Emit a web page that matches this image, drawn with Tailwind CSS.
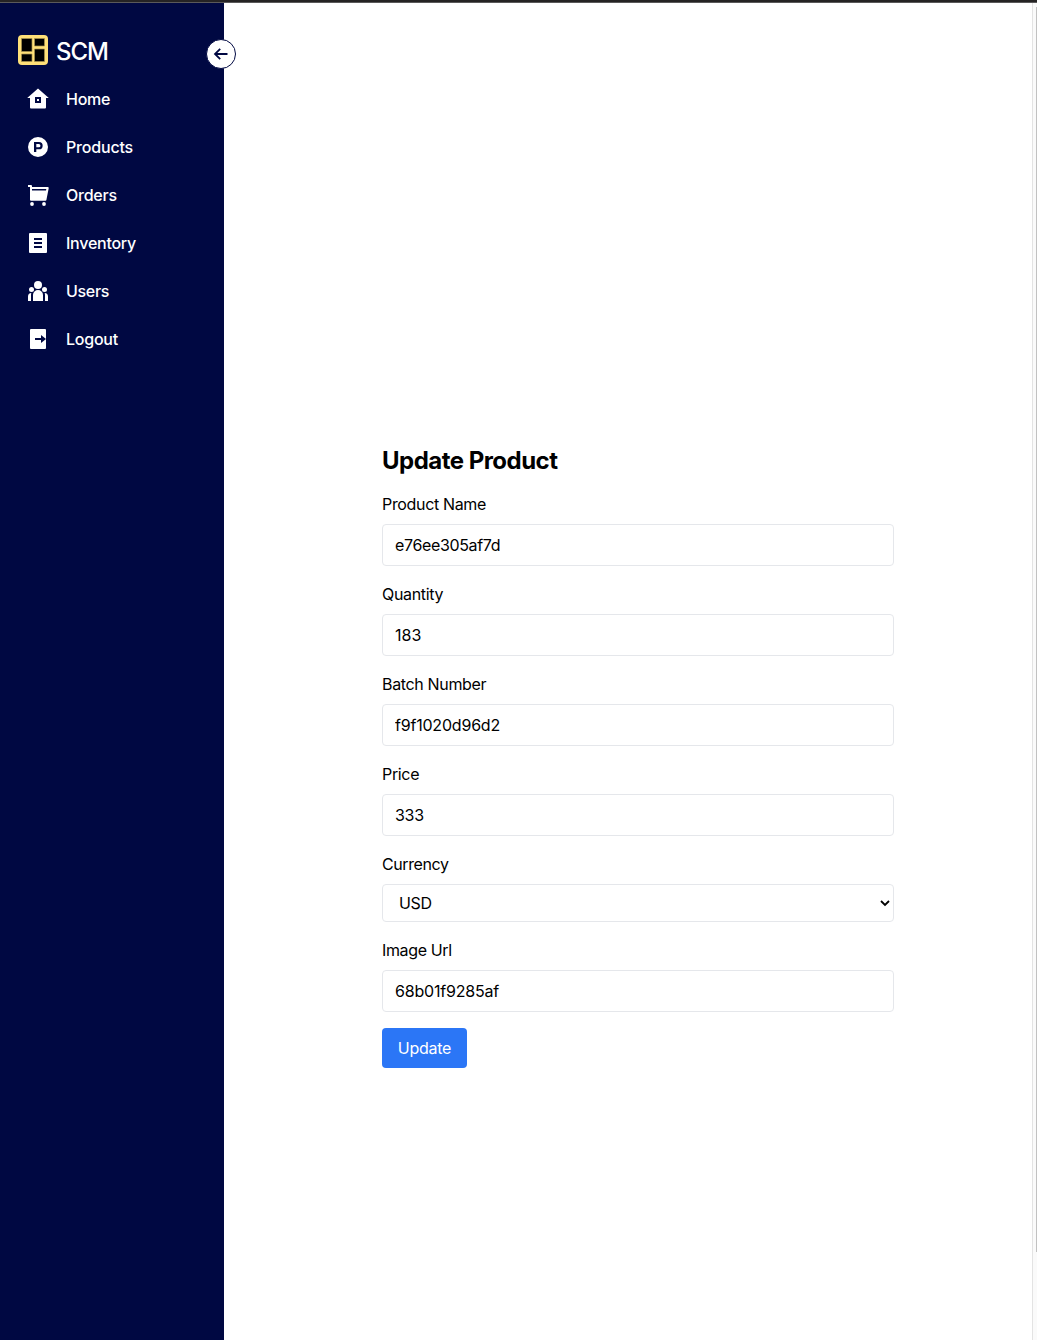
<!DOCTYPE html>
<html lang="en">
<head>
<meta charset="utf-8">
<title>Update Product</title>
<script src="https://cdn.jsdelivr.net/npm/@tailwindcss/browser@4"></script>
</head>
<body class="h-[1340px] overflow-hidden bg-white font-['Inter',sans-serif] text-base text-black flex flex-col">
<div class="h-[3px] shrink-0 bg-[#252324] border-b border-[#5a595a]"></div>
<div class="flex flex-1">
  <aside class="relative w-56 shrink-0 bg-[#000842] text-white pt-8 pl-[18px]">
    <button class="absolute left-[206px] top-9 size-[30px] rounded-full bg-white border border-[#000842] flex items-center justify-center" aria-label="Collapse">
      <svg class="size-4" viewBox="0 0 16 16" fill="none" stroke="#000842" stroke-width="1.8"><path d="M14.500 8H2M7.200 2.800 2 8l5.200 5.200"/></svg>
    </button>
    <div class="flex items-center gap-2 h-8 mb-[9px] -mt-px">
      <svg class="size-[30px]" viewBox="0 0 30 30"><rect width="30" height="30" rx="4" fill="#ffe078"/><path d="M3.500 3.500H14v13H3.500zM16.500 3.500h10V11h-10zM3.500 19H14v7.500H3.500zM16.500 14h10v12.500h-10z" fill="#000" stroke="#a8924f" stroke-width=".7"/></svg>
      <span class="text-2xl font-medium tracking-[-1.1px] pt-1">SCM</span>
    </div>
    <nav class="flex flex-col font-medium">
      <a class="flex items-center h-12 pl-2 gap-4"><svg class="size-6" viewBox="0 0 24 24" fill="#fff"><path fill-rule="evenodd" d="M12 1.500 22.800 11H20v9.500a1 1 0 0 1-1 1H5a1 1 0 0 1-1-1V11H1.200zM9 10v6h6v-6zm2 2h2v2h-2z"/></svg><span class="tracking-[-0.25px]">Home</span></a>
      <a class="flex items-center h-12 pl-2 gap-4"><svg class="size-6" viewBox="0 0 24 24" fill="#fff"><path fill-rule="evenodd" d="M12 2a10 10 0 1 1 0 20 10 10 0 0 1 0-20zM8 7v10h2.300v-2.700H13a3.650 3.650 0 0 0 0-7.300zm2.300 2h2.500a1.600 1.600 0 0 1 0 3.300h-2.500z"/></svg><span class="tracking-[-0.18px]">Products</span></a>
      <a class="flex items-center h-12 pl-2 gap-4"><svg class="size-6" viewBox="0 0 24 24" fill="#fff"><path fill-rule="evenodd" d="M2 2h3a1 1 0 0 1 1 1v1h15.700a1 1 0 0 1 1 1.200l-2.300 11.700a1 1 0 0 1-1 .8H5a1 1 0 0 1-1-1V4H2zM6 6v1.600h14L20.300 6z"/><circle cx="6" cy="21" r="1.900"/><circle cx="18" cy="21" r="1.900"/></svg><span class="tracking-[-0.25px]">Orders</span></a>
      <a class="flex items-center h-12 pl-2 gap-4"><svg class="size-6" viewBox="0 0 24 24" fill="#fff"><path fill-rule="evenodd" d="M4 2h16a1 1 0 0 1 1 1v18a1 1 0 0 1-1 1H4a1 1 0 0 1-1-1V3a1 1 0 0 1 1-1zM8 7v2h8V7zm0 4v2h8v-2zm0 4v2h8v-2z"/></svg><span class="tracking-[-0.25px]">Inventory</span></a>
      <a class="flex items-center h-12 pl-2 gap-4"><svg class="size-6" viewBox="0 0 24 24" fill="#fff"><circle cx="12" cy="6" r="4"/><circle cx="5.500" cy="10.500" r="2.500"/><circle cx="18.500" cy="10.500" r="2.500"/><path d="M12 11a5 5 0 0 1 5 5v6H7v-6a5 5 0 0 1 5-5zM5.300 14.100A7 7 0 0 0 5 16v6H2v-4.500a3.500 3.500 0 0 1 3.300-3.400zM18.700 14.100A7 7 0 0 1 19 16v6h3v-4.500a3.500 3.500 0 0 0-3.300-3.400z"/></svg><span class="tracking-[-0.3px]">Users</span></a>
      <a class="flex items-center h-12 pl-2 gap-4"><svg class="size-6" viewBox="0 0 24 24" fill="#fff"><rect x="4" y="2" width="16" height="20" rx="1"/><path d="M9 11h6V8l5 4-5 4v-3H9z" fill="#000842"/></svg><span class="tracking-[-0.25px]">Logout</span></a>
    </nav>
  </aside>
  <main class="flex-1 pl-[158px] pt-[441px]">
    <form class="w-[512px]">
      <h2 class="text-2xl font-bold pt-px mb-[15px] tracking-[-0.52px]">Update Product</h2>
      <label class="block mb-2 tracking-[-0.34px]">Product Name</label>
      <input class="block w-full h-[42px] px-3 mb-4 border border-gray-200 rounded tracking-[-0.35px]" value="e76ee305af7d">
      <label class="block mb-2 tracking-[-0.34px]">Quantity</label>
      <input class="block w-full h-[42px] px-3 mb-4 border border-gray-200 rounded tracking-[0px]" value="183">
      <label class="block mb-2 tracking-[-0.34px]">Batch Number</label>
      <input class="block w-full h-[42px] px-3 mb-4 border border-gray-200 rounded tracking-[-0.2px]" value="f9f1020d96d2">
      <label class="block mb-2 tracking-[-0.34px]">Price</label>
      <input class="block w-full h-[42px] px-3 mb-4 border border-gray-200 rounded tracking-[-0.3px]" value="333">
      <label class="block mb-2 tracking-[-0.4px]">Currency</label>
      <div class="grid items-center mb-4">
        <select class="col-start-1 row-start-1 appearance-none w-full h-[38px] px-4 border border-gray-200 rounded bg-white tracking-[-0.3px]"><option>USD</option></select>
        <svg class="col-start-1 row-start-1 justify-self-end mr-[3px] w-3 h-2 pointer-events-none" viewBox="0 0 12 8" fill="none" stroke="#000" stroke-width="1.800"><path d="M2 2l4 4 4-4"/></svg>
      </div>
      <label class="block mb-2 tracking-[-0.37px]">Image Url</label>
      <input class="block w-full h-[42px] px-3 mb-4 border border-gray-200 rounded tracking-[-0.2px]" value="68b01f9285af">
      <button type="button" class="block w-[85px] h-10 rounded bg-[#2b76f6] text-white tracking-[-0.25px]">Update</button>
    </form>
  </main>
  <div class="w-[5px] shrink-0 bg-[#fafafa] border-l border-[#e3e3e3] pt-1 flex justify-end">
    <div class="w-px h-[1245px] bg-[#c1c1c1]"></div>
  </div>
</div>
</body>
</html>
